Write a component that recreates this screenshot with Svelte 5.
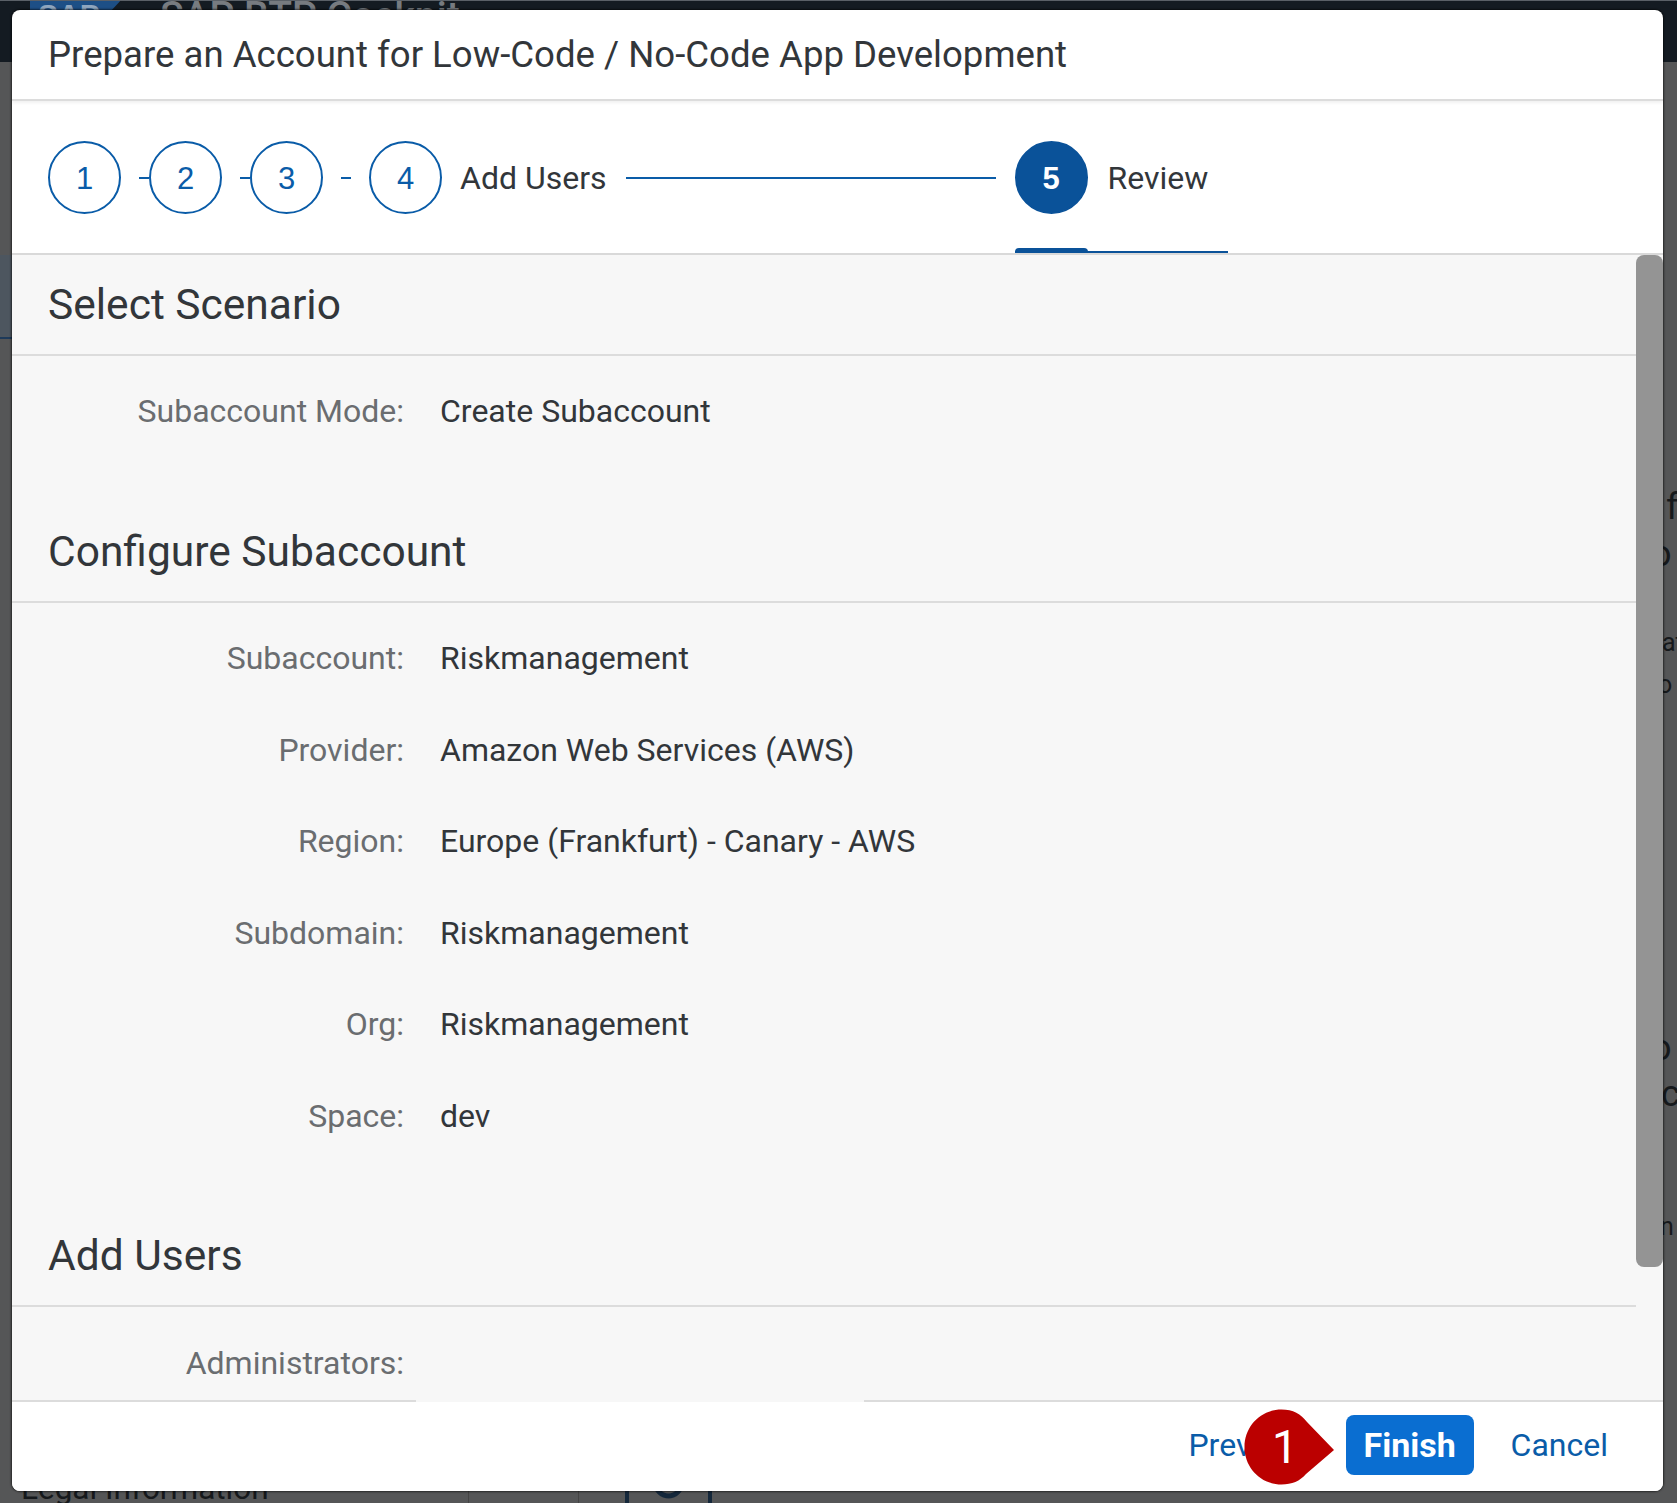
<script>
  const sections = [
    {
      title: 'Select Scenario',
      rows: [['Subaccount Mode:', 'Create Subaccount']]
    },
    {
      title: 'Configure Subaccount',
      rows: [
        ['Subaccount:', 'Riskmanagement'],
        ['Provider:', 'Amazon Web Services (AWS)'],
        ['Region:', 'Europe (Frankfurt) - Canary - AWS'],
        ['Subdomain:', 'Riskmanagement'],
        ['Org:', 'Riskmanagement'],
        ['Space:', 'dev']
      ]
    },
    {
      title: 'Add Users',
      rows: [['Administrators:', '']]
    }
  ];
  const doneSteps = ['1', '2', '3'];
</script>

<div class="page">
  <div class="shellbar">
    <span class="logo">SAP</span>
    <span class="cockpit">SAP BTP Cockpit</span>
  </div>
  <div class="left-band"></div>
  <span class="frag f1">f</span>
  <span class="frag f2">o</span>
  <span class="frag f3">at</span>
  <span class="frag f4">o</span>
  <span class="frag f5">o</span>
  <span class="frag f6">c</span>
  <span class="frag f7">n</span>
  <span class="legal">Legal Information</span>
  <span class="divider d1"></span>
  <span class="divider d2"></span>
  <span class="foot-icon"></span>

  <div class="dialog">
    <header class="title">Prepare an Account for Low-Code / No-Code App Development</header>

    <nav class="steps">
      {#each doneSteps as n}
        <span class="circle">{n}</span>
        <span class="dash"></span>
      {/each}
      <span class="circle four">4</span>
      <span class="step-label">Add Users</span>
      <span class="line"></span>
      <span class="circle current">5</span>
      <span class="step-label review">Review</span>
      <span class="underline"></span>
      <span class="underline-cap"></span>
    </nav>

    <div class="content">
      {#each sections as s}
        <section>
          <h2>{s.title}</h2>
          <div class="rows">
            {#each s.rows as [label, value]}
              <div class="row">
                <span class="label">{label}</span>
                <span class="value">{value}</span>
              </div>
            {/each}
          </div>
        </section>
      {/each}
      <div class="scrollbar"></div>
    </div>

    <footer>
      <span class="rule left"></span>
      <span class="rule right"></span>
      <button class="link prev">Previous</button>
      <button class="primary">Finish</button>
      <button class="link cancel">Cancel</button>
      <span class="bubble">
        <svg width="92" height="76" viewBox="0 0 92 76">
          <path d="M37.5 0.5C49 0.5 57 5 63 13L90 41L62 65C56 72 48 75.500 37.500 75.500C17 75.500 0.500 59 0.500 38C0.500 17 17 0.500 37.500 0.500Z" fill="#bb0000" />
        </svg>
        <span class="bubble-num">1</span>
      </span>
    </footer>
  </div>
</div>

<style>
  :global(body) {
    margin: 0;
    background: #fff;
  }

  .page {
    position: relative;
    width: 1677px;
    height: 1503px;
    background: #555657;
    overflow: hidden;
    font-family: Roboto, "Liberation Sans", sans-serif;
  }

  .shellbar {
    height: 62px;
    background: #141b22;
    border-top: 1px solid #5a6067;
    box-sizing: border-box;
    position: relative;
    overflow: hidden;
  }

  .logo {
    position: absolute;
    left: 30px;
    top: -3px;
    width: 93px;
    height: 30px;
    background: #1d4f86;
    clip-path: polygon(0 0, 100% 0, 70% 100%, 0 100%);
    color: #8fa6bf;
    font: bold 30px "Liberation Sans", sans-serif;
    text-indent: 8px;
  }

  .cockpit {
    position: absolute;
    left: 160px;
    top: -4px;
    color: #777b80;
    font-size: 39px;
    font-weight: 500;
    line-height: 1;
    white-space: nowrap;
  }

  .left-band {
    position: absolute;
    left: 0;
    top: 255px;
    width: 12px;
    height: 82px;
    background: #4d565f;
    border-bottom: 2px solid #1d3a5a;
  }

  .frag {
    position: absolute;
    left: 1666px;
    color: #16191c;
    font-size: 36px;
    line-height: 1;
  }

  .f1 { top: 489px; }
  .f2 { top: 536px; left: 1651px; }
  .f3 { top: 630px; font-size: 25px; left: 1662px; }
  .f4 { top: 672px; font-size: 25px; left: 1658px; }
  .f5 { top: 1030px; left: 1651px; }
  .f6 { top: 1076px; left: 1661px; }
  .f7 { top: 1214px; font-size: 25px; left: 1660px; }

  .legal {
    position: absolute;
    left: 21px;
    top: 1470px;
    color: #16191c;
    font-size: 31.5px;
    line-height: 1.2;
  }

  .divider {
    position: absolute;
    top: 1480px;
    bottom: 0;
    width: 1px;
    background: #444;
  }

  .d1 { left: 468px; }
  .d2 { left: 578px; }

  .foot-icon {
    position: absolute;
    left: 625px;
    top: 1470px;
    width: 87px;
    height: 34px;
    border: solid #15283b;
    border-width: 0 4px;
    box-sizing: border-box;
    background: radial-gradient(circle at 50% 38%, transparent 10px, #15283b 11px, #15283b 15px, transparent 16px);
  }

  .dialog {
    position: absolute;
    left: 12px;
    top: 10px;
    width: 1651px;
    height: 1481px;
    display: flex;
    flex-direction: column;
    background: #fff;
    border-radius: 8px;
    overflow: hidden;
    color: #32363a;
    box-shadow: 0 0 2px 1px rgba(0, 0, 0, 0.55);
  }

  .title {
    height: 89px;
    padding-left: 36px;
    display: flex;
    align-items: center;
    font-size: 36.600px;
    border-bottom: 2px solid #dcdcdc;
    box-shadow: 0 2px 3px rgba(0, 0, 0, 0.06);
    flex: none;
  }

  .steps {
    position: relative;
    height: 152px;
    padding-left: 36px;
    display: flex;
    align-items: center;
    border-bottom: 2px solid #d9d9d9;
    flex: none;
    font-size: 32px;
  }

  .circle {
    width: 73px;
    height: 73px;
    box-sizing: border-box;
    border: 2px solid #0a5ca8;
    border-radius: 50%;
    display: flex;
    align-items: center;
    justify-content: center;
    color: #0a5ca8;
    font: 31px/1 "Liberation Sans", sans-serif;
    padding-top: 2px;
    flex: none;
  }

  .circle.current {
    background: #0a5299;
    border-color: #0a5299;
    color: #fff;
    font-weight: 700;
  }

  .dash {
    width: 10px;
    height: 2px;
    margin: 2px 0 0 18px;
    background: #0a5ca8;
    flex: none;
  }

  .dash:nth-of-type(6) {
    margin-right: 18px;
  }

  .step-label {
    margin-left: 18px;
    padding-top: 2px;
  }

  .line {
    width: 370px;
    height: 2px;
    margin: 2px 19px 0 19px;
    background: #0a5ca8;
  }

  .step-label.review {
    margin-left: 20px;
  }

  .underline {
    position: absolute;
    left: 1003px;
    bottom: 0;
    width: 213px;
    height: 2px;
    background: #0a5299;
  }

  .underline-cap {
    position: absolute;
    left: 1003px;
    bottom: 0;
    width: 73px;
    height: 5px;
    background: #0a5299;
    border-radius: 4px 4px 0 0;
  }

  .content {
    position: relative;
    flex: 1;
    min-height: 0;
    background: #f7f7f7;
    overflow: hidden;
  }

  section {
    padding-bottom: 45px;
  }

  h2 {
    margin: 0 27px 0 0;
    height: 100.500px;
    padding-left: 36px;
    box-sizing: border-box;
    display: flex;
    align-items: center;
    font-size: 42.500px;
    font-weight: 400;
    border-bottom: 2px solid #dcdcdc;
  }

  .rows {
    padding-top: 10px;
  }

  .row {
    display: grid;
    grid-template-columns: 392px 1fr;
    column-gap: 36px;
    height: 91.500px;
    align-items: center;
    font-size: 32px;
  }

  .label {
    text-align: right;
    color: #6a6d70;
  }

  .scrollbar {
    position: absolute;
    top: 0;
    right: 0;
    width: 27px;
    height: 1012px;
    background: #949494;
    border-radius: 8px;
  }

  footer {
    position: relative;
    height: 91px;
    flex: none;
    display: flex;
    align-items: center;
    justify-content: flex-end;
    padding: 0 55px 4px 0;
    box-sizing: border-box;
    background: #fff;
    border-top: 2px solid #f7f7f7;
  }

  .rule {
    position: absolute;
    top: -2px;
    height: 2px;
    background: #dcdcdc;
  }

  .rule.left {
    left: 0;
    width: 404px;
  }

  .rule.right {
    left: 852px;
    right: 0;
  }

  button {
    font-family: inherit;
    font-size: 32px;
    border: none;
    background: none;
    padding: 0;
  }

  .link {
    color: #0a5ca8;
  }

  .prev {
    margin-right: 34px;
  }

  .primary {
    width: 128px;
    height: 60px;
    border-radius: 8px;
    background: #0a6ed1;
    color: #fff;
    font-size: 34px;
    font-weight: 700;
    margin-right: 37px;
  }

  .bubble {
    position: absolute;
    left: 1232px;
    top: 7px;
    width: 92px;
    height: 76px;
  }

  .bubble svg {
    display: block;
  }

  .bubble-num {
    position: absolute;
    left: 3px;
    top: 0;
    width: 76px;
    height: 76px;
    display: flex;
    align-items: center;
    justify-content: center;
    color: #fff;
    font: 46px Roboto, sans-serif;
  }
</style>
